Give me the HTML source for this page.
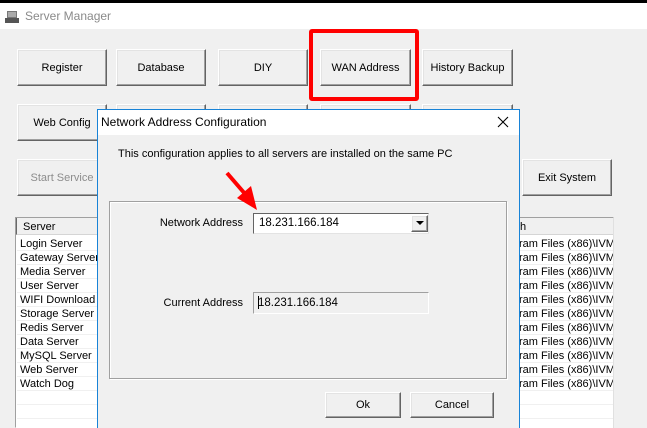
<!DOCTYPE html>
<html><head><meta charset="utf-8"><style>
*{margin:0;padding:0;box-sizing:border-box}
html,body{width:647px;height:428px;overflow:hidden}
body{background:#f0f0f0;font-family:"Liberation Sans",Tahoma,sans-serif;font-size:11px;color:#000;position:relative}
.a{position:absolute;white-space:nowrap}
.btn{position:absolute;background:#f0f0f0;border:1px solid;border-color:#fff #646464 #646464 #fff;box-shadow:inset -1px -1px 0 #a0a0a0,inset 1px 1px 0 #e3e3e3;display:flex;align-items:center;justify-content:center;font-size:11px;white-space:nowrap}
.row{position:absolute;left:17px;width:596px;height:14px;border-bottom:1px solid #f0f0f0;background:#fff;line-height:14px;white-space:nowrap;overflow:hidden}
.row .p{position:absolute;left:502px;top:0}
</style></head><body>
<div class="a" style="left:0;top:0;width:647px;height:3px;background:#000"></div>
<div class="a" style="left:0;top:3px;width:647px;height:26px;background:#fff"></div>
<svg class="a" style="left:5px;top:10px" width="15" height="14"><rect x="2" y="1" width="10" height="7" fill="#777"/><rect x="0" y="8" width="14" height="5" fill="#555"/><rect x="3" y="2" width="8" height="5" fill="#aaa"/></svg>
<div class="a" style="left:25px;top:9px;font-size:12px;color:#8a8a8a">Server Manager</div>

<div class="btn" style="left:17px;top:49px;width:90px;height:37px">Register</div>
<div class="btn" style="left:116px;top:49px;width:90px;height:37px">Database</div>
<div class="btn" style="left:218px;top:49px;width:90px;height:37px">DIY</div>
<div class="btn" style="left:320px;top:49px;width:91px;height:37px">WAN Address</div>
<div class="btn" style="left:422px;top:49px;width:91px;height:37px">History Backup</div>
<div class="a" style="left:309px;top:29px;width:110px;height:72px;border:4px solid #f00;border-radius:3px"></div>

<div class="btn" style="left:17px;top:104px;width:90px;height:37px">Web Config</div>
<div class="btn" style="left:116px;top:104px;width:90px;height:37px"></div>
<div class="btn" style="left:218px;top:104px;width:90px;height:37px"></div>
<div class="btn" style="left:320px;top:104px;width:91px;height:37px"></div>
<div class="btn" style="left:422px;top:104px;width:91px;height:37px"></div>

<div class="btn" style="left:17px;top:159px;width:90px;height:37px;color:#8d8d8d">Start Service</div>
<div class="btn" style="left:522px;top:159px;width:90px;height:37px">Exit System</div>

<div class="a" style="left:15px;top:217px;width:599px;height:211px;border:1px solid;border-color:#a0a0a0 #fff #fff #a0a0a0;background:#fff"></div>
<div class="a" style="left:16px;top:218px;width:597px;height:17px;background:#f0f0f0;border-bottom:1px solid #d5d5d5;border-left:1px solid #696969"></div>
<div class="a" style="left:23px;top:221px;font-size:11px">Server</div>
<div class="a" style="left:520px;top:221px">h</div>
<div class="row" style="top:237px"><span style="padding-left:3px">Login Server</span><span class="p">ram Files (x86)\IVM</span></div>
<div class="row" style="top:251px"><span style="padding-left:3px">Gateway Server</span><span class="p">ram Files (x86)\IVM</span></div>
<div class="row" style="top:265px"><span style="padding-left:3px">Media Server</span><span class="p">ram Files (x86)\IVM</span></div>
<div class="row" style="top:279px"><span style="padding-left:3px">User Server</span><span class="p">ram Files (x86)\IVM</span></div>
<div class="row" style="top:293px"><span style="padding-left:3px">WIFI Download</span><span class="p">ram Files (x86)\IVM</span></div>
<div class="row" style="top:307px"><span style="padding-left:3px">Storage Server</span><span class="p">ram Files (x86)\IVM</span></div>
<div class="row" style="top:321px"><span style="padding-left:3px">Redis Server</span><span class="p">ram Files (x86)\IVM</span></div>
<div class="row" style="top:335px"><span style="padding-left:3px">Data Server</span><span class="p">ram Files (x86)\IVM</span></div>
<div class="row" style="top:349px"><span style="padding-left:3px">MySQL Server</span><span class="p">ram Files (x86)\IVM</span></div>
<div class="row" style="top:363px"><span style="padding-left:3px">Web Server</span><span class="p">ram Files (x86)\IVM</span></div>
<div class="row" style="top:377px"><span style="padding-left:3px">Watch Dog</span><span class="p">ram Files (x86)\IVM</span></div>
<div class="row" style="top:391px"></div>
<div class="row" style="top:405px"></div>
<div class="a" style="left:613px;top:218px;width:1px;height:210px;background:#e0e0e0"></div>

<!-- dialog -->
<div class="a" style="left:97px;top:109px;width:423px;height:319px;border:1px solid #1883d7;border-bottom:none;background:#f0f0f0"></div>
<div class="a" style="left:98px;top:110px;width:421px;height:25px;background:#fff"></div>
<div class="a" style="left:101px;top:115px;font-size:12px">Network Address Configuration</div>
<svg class="a" style="left:497px;top:116px" width="12" height="12"><path d="M1 1L11 11M11 1L1 11" stroke="#000" stroke-width="1.1"/></svg>
<div class="a" style="left:118px;top:148px">This configuration applies to all servers are installed on the same PC</div>
<div class="a" style="left:109px;top:201px;width:398px;height:178px;border:1px solid #a0a0a0;box-shadow:inset 1px 1px 0 #fff, 1px 1px 0 #fff"></div>
<div class="a" style="left:110px;top:217px;width:133px;text-align:right">Network Address</div>
<div class="a" style="left:253px;top:213px;width:176px;height:21px;background:#fff;border:1px solid;border-color:#646464 #e3e3e3 #e3e3e3 #646464"></div>
<div class="a" style="left:259px;top:217px;font-size:11.5px">18.231.166.184</div>
<div class="btn" style="left:411px;top:215px;width:17px;height:17px"><svg width="8" height="5"><path d="M0 0H8L4 4Z" fill="#000"/></svg></div>
<div class="a" style="left:110px;top:297px;width:133px;text-align:right">Current Address</div>
<div class="a" style="left:253px;top:292px;width:176px;height:22px;background:#f0f0f0;border:1px solid;border-color:#a0a0a0 #fff #fff #a0a0a0"></div>
<div class="a" style="left:258px;top:297px;font-size:11.5px">18.231.166.184</div>
<div class="a" style="left:258px;top:296px;width:1px;height:13px;background:#000"></div>
<div class="btn" style="left:325px;top:392px;width:76px;height:26px">Ok</div>
<div class="btn" style="left:410px;top:392px;width:84px;height:26px">Cancel</div>

<svg class="a" style="left:0;top:0" width="647" height="428"><path d="M227 173L246 195" stroke="#f00" stroke-width="4"/><path d="M257 210L237 198L251 186Z" fill="#f00"/></svg>
</body></html>
